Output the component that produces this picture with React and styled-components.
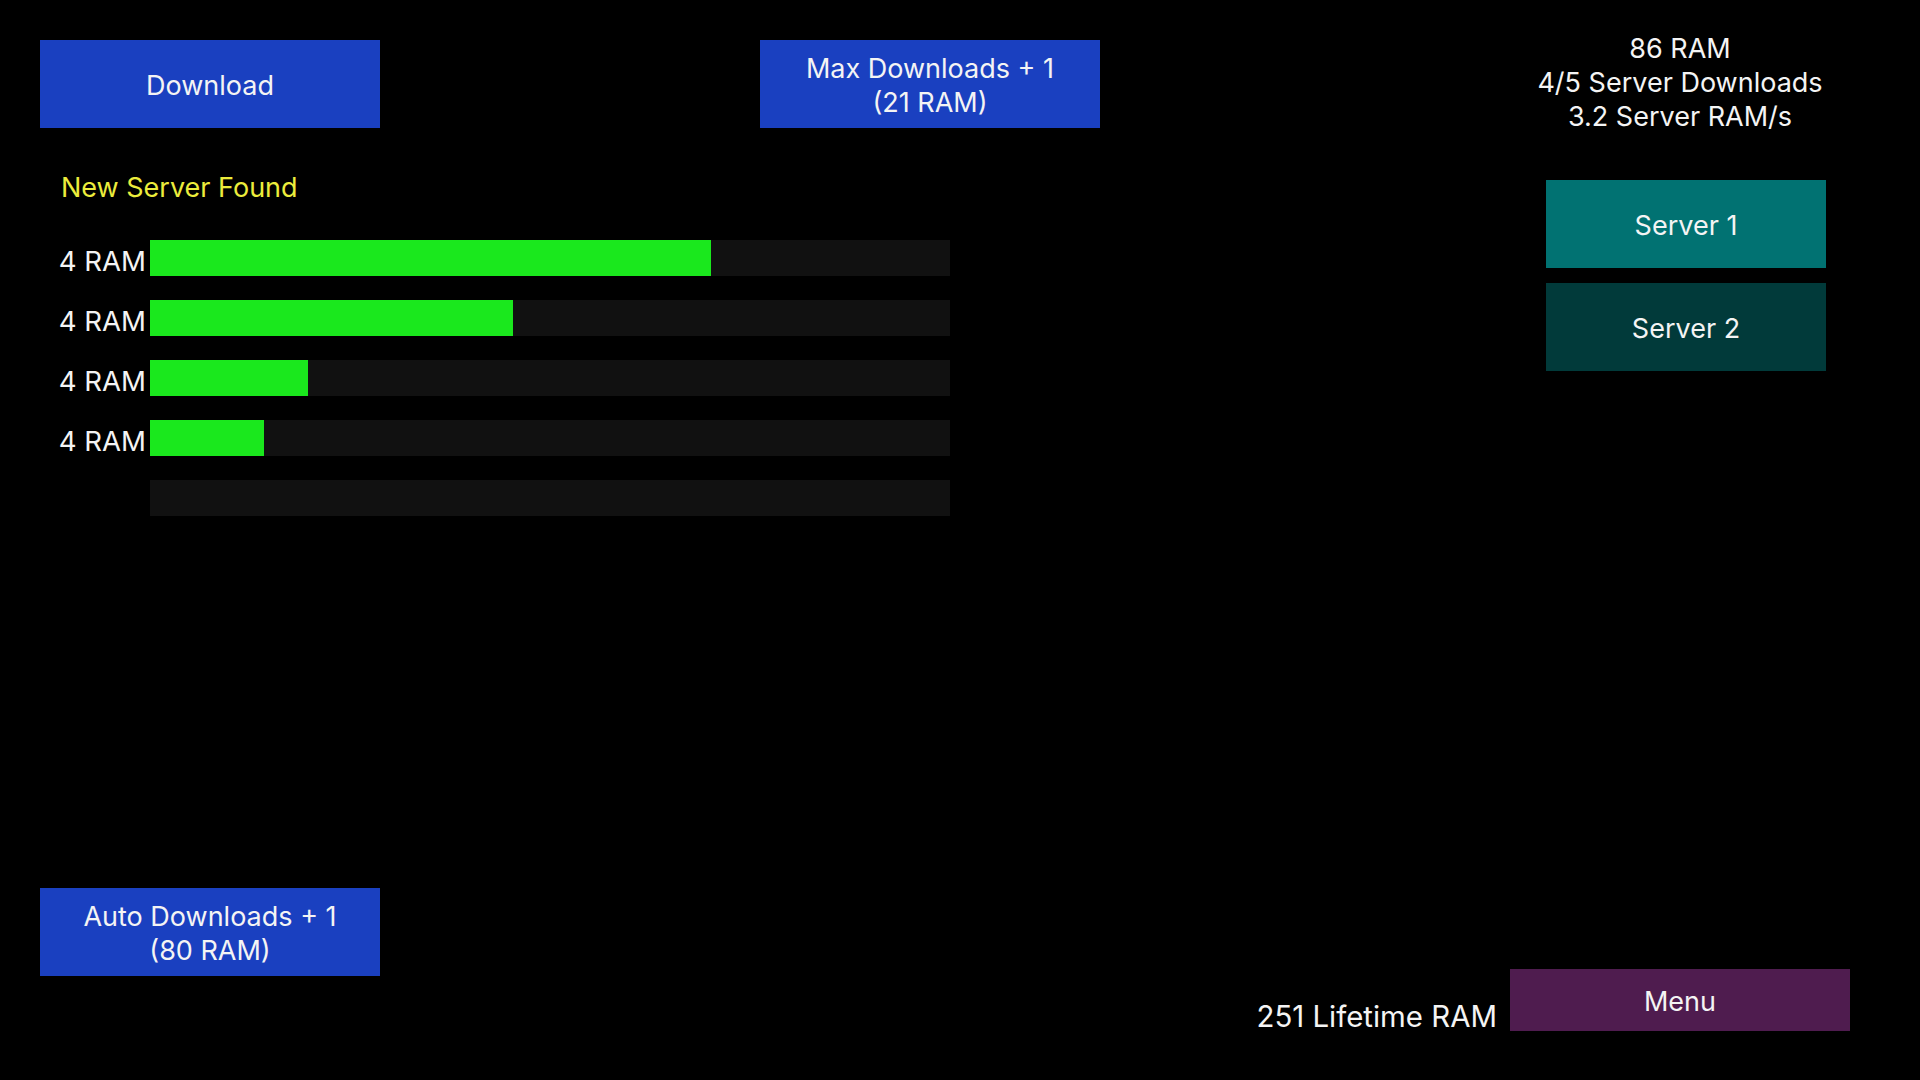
import React from "react";
import styled, { createGlobalStyle } from "styled-components";

const GlobalStyle = createGlobalStyle`
  html, body {
    margin: 0;
    padding: 0;
    background: #000;
  }
  body {
    font-family: Inter, "Noto Sans", sans-serif;
    color: #f4f4f4;
  }
`;

const Screen = styled.div`
  width: 1920px;
  height: 1080px;
  box-sizing: border-box;
  padding: 0 70px 0 40px;
  display: grid;
  grid-template-columns: 1060px 1fr 650px;
  overflow: hidden;
  font-size: 27px;
  line-height: 34px;
`;

const LeftColumn = styled.div`
  display: flex;
  flex-direction: column;
`;

const RightColumn = styled.div`
  grid-column: 3;
  display: flex;
  flex-direction: column;
  align-items: flex-end;
`;

const TopRow = styled.div`
  margin-top: 40px;
  display: flex;
  justify-content: space-between;
`;

const Button = styled.button`
  width: ${props => props.$width || 340}px;
  height: ${props => props.$height || 88}px;
  border: none;
  margin: 0;
  padding: 3px 0 0;
  box-sizing: border-box;
  background: ${props => props.$bg || "#1a40c0"};
  color: #f4f4f4;
  font: inherit;
  text-align: center;
  display: flex;
  flex-direction: column;
  align-items: center;
  justify-content: center;
  flex-shrink: 0;
  cursor: pointer;
`;

const Notice = styled.div`
  margin-top: 43px;
  padding-left: 21px;
  color: #ecec3c;
`;

const BarList = styled.div`
  margin-top: 35px;
  display: flex;
  flex-direction: column;
  gap: 24px;
`;

const BarRow = styled.div`
  display: flex;
  align-items: flex-end;
  gap: 4px;
`;

const BarLabel = styled.div`
  width: 106px;
  margin-bottom: -2px;
  font-size: 27.6px;
  text-align: right;
  white-space: nowrap;
`;

const Track = styled.div`
  width: 800px;
  height: 36px;
  background: #111111;
  display: flex;
`;

const Fill = styled.div`
  height: 100%;
  background: #1ae81d;
`;

const BottomLeft = styled.div`
  margin-top: auto;
  margin-bottom: 104px;
`;

const Stats = styled.div`
  margin-top: 32px;
  width: 340px;
  text-align: center;
  white-space: nowrap;
`;

const ServerList = styled.div`
  margin-top: 46px;
  width: 340px;
  display: flex;
  flex-direction: column;
  align-items: center;
  gap: 15px;
  padding-left: 12px;
  box-sizing: border-box;
`;

const Footer = styled.div`
  margin-top: auto;
  margin-bottom: 49px;
  display: flex;
  align-items: flex-end;
  gap: 13px;
`;

const Lifetime = styled.div`
  font-size: 29.4px;
  white-space: nowrap;
  margin-bottom: -3px;
`;

const downloads = [
  { id: 1, ram: 4, progress: 0.701 },
  { id: 2, ram: 4, progress: 0.454 },
  { id: 3, ram: 4, progress: 0.198 },
  { id: 4, ram: 4, progress: 0.142 },
  { id: 5, ram: null, progress: 0 }
];

const servers = [
  { id: 1, name: "Server 1", color: "#017272" },
  { id: 2, name: "Server 2", color: "#013a3a" }
];

const App = () => {
  return (
    <>
      <GlobalStyle />
      <Screen>
        <LeftColumn>
          <TopRow>
            <Button>Download</Button>
            <Button>
              <span>Max Downloads + 1</span>
              <span>(21 RAM)</span>
            </Button>
          </TopRow>

          <Notice>New Server Found</Notice>

          <BarList>
            {downloads.map(item => (
              <BarRow key={item.id}>
                <BarLabel>{item.ram ? `${item.ram} RAM` : ""}</BarLabel>
                <Track>
                  <Fill style={{ width: `${item.progress * 100}%` }} />
                </Track>
              </BarRow>
            ))}
          </BarList>

          <BottomLeft>
            <Button>
              <span>Auto Downloads + 1</span>
              <span>(80 RAM)</span>
            </Button>
          </BottomLeft>
        </LeftColumn>

        <RightColumn>
          <Stats>
            <div>86 RAM</div>
            <div>4/5 Server Downloads</div>
            <div>3.2 Server RAM/s</div>
          </Stats>

          <ServerList>
            {servers.map(server => (
              <Button key={server.id} $width={280} $bg={server.color}>
                {server.name}
              </Button>
            ))}
          </ServerList>

          <Footer>
            <Lifetime>251 Lifetime RAM</Lifetime>
            <Button $height={62} $bg="#4f1c4f">
              Menu
            </Button>
          </Footer>
        </RightColumn>
      </Screen>
    </>
  );
};

export default App;
